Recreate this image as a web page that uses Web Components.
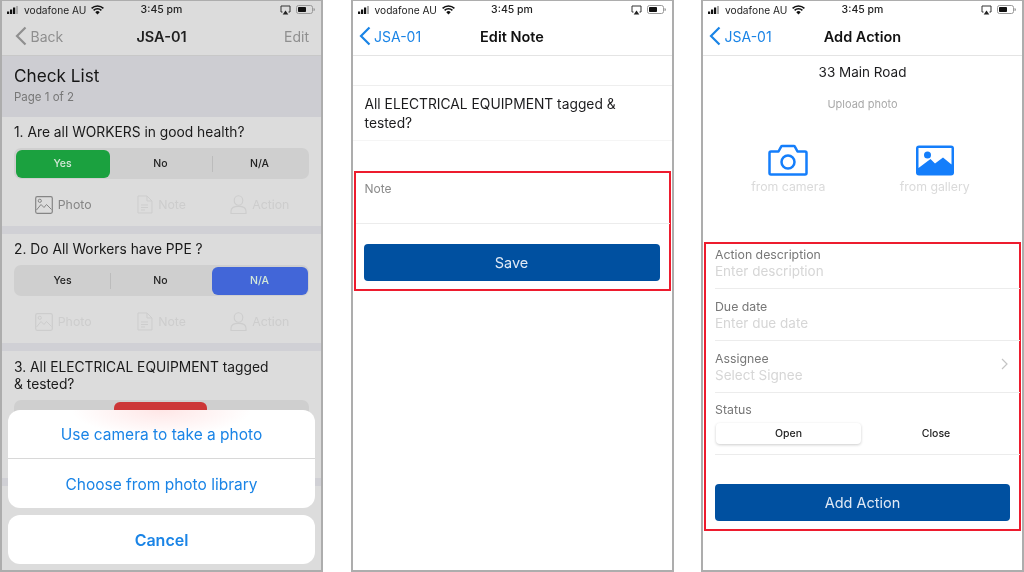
<!DOCTYPE html>
<html>
<head>
<meta charset="utf-8">
<style>
  html, body { margin: 0; height: 572px; overflow: hidden; background: #fff; }
  body { font-family: Inter, "Liberation Sans", sans-serif; color: #1c1c1e; }
  #page { display: flex; justify-content: space-between; height: 572px; }
  .dim {
    --bar-bg: #dcdcdc;
    --bar-line: #c8c8c8;
    --bar-title: #1f1f1f;
    --bar-link: #8f8f8f;
    --frame-bg: #dcdcdc;
  }
</style>
</head>
<body>
<div id="page">
  <app-phone class="dim">
    <status-bar></status-bar>
    <nav-bar back="Back" heading="JSA-01" action="Edit" style="--nav-pad:13px"></nav-bar>
    <list-header heading="Check List" sub="Page 1 of 2"></list-header>
    <check-card question="1. Are all WORKERS in good health?" selected="0" tint="#1ba13f" tools="photo"></check-card>
    <check-card question="2. Do All Workers have PPE ?" selected="2" tint="#4266d8"></check-card>
    <check-card question="3. All ELECTRICAL EQUIPMENT tagged &amp; tested?" selected="1" tint="#cc3637" tall></check-card>
    <hidden-marks></hidden-marks>
    <action-sheet>
      <sheet-button>Use camera to take a photo</sheet-button>
      <sheet-button>Choose from photo library</sheet-button>
      <sheet-button slot="cancel" strong>Cancel</sheet-button>
    </action-sheet>
  </app-phone>

  <app-phone>
    <status-bar></status-bar>
    <nav-bar back="JSA-01" heading="Edit Note" style="--nav-pad:6px"></nav-bar>
    <note-question>All ELECTRICAL EQUIPMENT tagged &amp; tested?</note-question>
    <red-box style="--box-gap:30px;--box-height:120px">
      <note-field>Note</note-field>
      <main-button style="--btn-top:20px;--btn-left:-1px">Save</main-button>
    </red-box>
  </app-phone>

  <app-phone>
    <status-bar></status-bar>
    <nav-bar back="JSA-01" heading="Add Action" style="--nav-pad:6px"></nav-bar>
    <upload-panel address="33 Main Road"></upload-panel>
    <red-box style="--box-gap:0px;--box-height:289px">
      <form-field first label="Action description" hint="Enter description"></form-field>
      <form-field label="Due date" hint="Enter due date"></form-field>
      <form-field label="Assignee" hint="Select Signee" chevron></form-field>
      <status-field></status-field>
      <main-button style="--btn-top:29px;--btn-width:295px">Add Action</main-button>
    </red-box>
  </app-phone>
</div>

<script>
const FONT = 'Inter, "Liberation Sans", sans-serif'

// small base class, every element just renders a string into its open shadow root
class Base extends HTMLElement {
  constructor() {
    super()
    this._shadowRoot = this.attachShadow({ mode: 'open' })
  }
  connectedCallback() {
    this._shadowRoot.innerHTML = this.render()
  }
  attr(name, fallback = '') {
    return this.hasAttribute(name) ? this.getAttribute(name) : fallback
  }
}

class AppPhone extends Base {
  render() {
    return `<style>
      :host {
        display: flex; flex-direction: column; position: relative; box-sizing: border-box;
        width: 323px; height: 572px; overflow: hidden;
        border: solid #adadad; border-width: 1px 2px 2px 2px;
        background: var(--frame-bg, #fff);
        font-family: ${FONT};
        filter: blur(.4px);
      }
    </style><slot></slot>`
  }
}

class StatusBar extends Base {
  render() {
    return `<style>
      :host { display: flex; align-items: center; height: 17px; padding: 0 6px 0 5px; flex: none; position: relative; font-size: 10.2px; color: #222; }
      .carrier { margin-left: 6px; }
      .wifi { margin-left: 5px; }
      .time { position: absolute; left: 0; right: 0; text-align: center; font-size: 10.5px; font-weight: 500; }
      .right { margin-left: auto; display: flex; align-items: center; gap: 5px; }
    </style>
    <svg width="11" height="8" viewBox="0 0 11 8"><rect x="0" y="5.5" width="2.2" height="2.5" fill="#111"/><rect x="3" y="3.5" width="2.2" height="4.5" fill="#111"/><rect x="6" y="1.5" width="2.2" height="6.5" fill="#111"/><rect x="9" y="0" width="2" height="8" fill="#aaa"/></svg>
    <span class="carrier">vodafone AU</span>
    <svg class="wifi" width="13" height="10" viewBox="0 0 13 10"><path d="M.6 3.4a8.4 8.4 0 0 1 11.8 0M2.6 5.4a5.6 5.6 0 0 1 7.8 0" fill="none" stroke="#111" stroke-width="1.5"/><path d="M4.3 7.2a3 3 0 0 1 4.4 0L6.5 9.6z" fill="#111"/></svg>
    <span class="time">3:45 pm</span>
    <span class="right">
      <svg width="11" height="10" viewBox="0 0 11 10"><path d="M2.5 7H1V1h9v6H8.500" fill="none" stroke="#333" stroke-width="1"/><path d="M5.500 5.500 8.300 9.500H2.700z" fill="#222"/></svg>
      <svg width="19" height="9" viewBox="0 0 19 9"><rect x=".5" y=".5" width="16" height="8" rx="2" fill="none" stroke="#999"/><rect x="2" y="2" width="8" height="5" rx=".8" fill="#111"/><path d="M17.500 3v3a1.500 1.500 0 0 0 0-3z" fill="#999"/></svg>
    </span>`
  }
}

class NavBar extends Base {
  render() {
    const action = this.attr('action')
    return `<style>
      :host {
        display: flex; align-items: center; position: relative; flex: none; box-sizing: border-box;
        height: 38px; padding: 0 12px 1px var(--nav-pad, 6px);
        background: var(--bar-bg, #fff); border-bottom: 1px solid var(--bar-line, #e4e4e4);
        font-size: 14px; color: var(--bar-link, #1a84e6);
      }
      svg { flex: none; margin-right: 3.500px; }
      h1 { position: absolute; left: 0; right: 0; margin: 0; text-align: center; font-size: 14.500px; font-weight: 600; color: var(--bar-title, #111); }
      .action { margin-left: auto; }
    </style>
    <svg width="12" height="20" viewBox="0 0 12 20"><path d="M10.500 1.500 2 10l8.500 8.500" fill="none" stroke="currentColor" stroke-width="2.200"/></svg>
    <span>${this.attr('back')}</span>
    <h1>${this.attr('heading')}</h1>
    ${action ? `<span class="action">${action}</span>` : ''}`
  }
}

class ListHeader extends Base {
  render() {
    return `<style>
      :host { display: block; flex: none; box-sizing: border-box; height: 61px; padding: 9px 12px 0; background: #cdcdd2; }
      h2 { margin: 0; font-size: 17.200px; font-weight: 400; line-height: 22px; color: #151515; }
      p { margin: 0; font-size: 11.500px; line-height: 20px; color: #777; }
    </style>
    <h2>${this.attr('heading')}</h2><p>${this.attr('sub')}</p>`
  }
}

class SegControl extends Base {
  render() {
    const selected = Number(this.attr('selected', '0'))
    const tint = this.attr('tint', '#fff')
    const items = this.attr('options', 'Yes,No,N/A').split(',').map((label, i) => {
      const on = i === selected
      const rule = !on && i > 0 && i - 1 !== selected ? 'rule' : ''
      return `<div class="${on ? 'on' : ''} ${rule}"${on ? ` style="background:${tint}"` : ''}>${label}</div>`
    }).join('')
    return `<style>
      :host { display: grid; grid-template-columns: 94px 1fr 96px; box-sizing: border-box; height: 31px; padding: 1.500px; margin: 0 12px; background: #cfcfcf; border-radius: 7px; font-size: 10.500px; font-weight: 500; color: #222; }
      div { display: flex; align-items: center; justify-content: center; border-radius: 6px; position: relative; }
      div:nth-of-type(2).on { margin: 0 4.500px; }
      .on { color: #d4e8d8; }
      .rule::before { content: ''; position: absolute; left: 0; top: 6px; bottom: 6px; width: 1px; background: #bcbcbc; }
    </style>${items}`
  }
}

const TOOL_ICONS = {
  photo: `<svg width="18" height="18" viewBox="0 0 18 18" fill="none" stroke="currentColor"><rect x=".7" y=".7" width="16.600" height="16.600" rx="1.500" stroke-width="1.200"/><circle cx="4.800" cy="4.800" r="1.600"/><path d="M1.500 14 6 8.500l3 3 2.500-3 5 5"/></svg>`,
  note: `<svg width="16" height="19" viewBox="0 0 16 19" fill="none" stroke="currentColor"><path d="M1 1h9l5 5v12H1zM10 1v5h5M4 10h7M4 12.500h7M4 15h4"/></svg>`,
  action: `<svg width="17" height="19" viewBox="0 0 17 19" fill="none" stroke="currentColor" stroke-width="1.100"><ellipse cx="8.500" cy="5.500" rx="4.300" ry="4.800"/><path d="M1 18.500v-2.300c0-2.900 3-4.800 7.500-4.800s7.500 1.900 7.500 4.800v2.300z"/></svg>`
}

class CheckTool extends Base {
  render() {
    const on = this.hasAttribute('on')
    return `<style>
      :host { flex: 1; display: flex; align-items: center; justify-content: center; gap: 5px; font-size: 12.300px; color: ${on ? '#858585' : '#cdcdcd'}; }
    </style>${TOOL_ICONS[this.attr('icon')]}<span>${this.attr('label')}</span>`
  }
}

class CheckCard extends Base {
  render() {
    const tall = this.hasAttribute('tall')
    const tools = this.attr('tools').split(',')
    const tool = (icon, label) => `<check-tool icon="${icon}" label="${label}"${tools.includes(icon) ? ' on' : ''}></check-tool>`
    return `<style>
      :host { display: block; flex: none; box-sizing: border-box; height: ${tall ? 135 : 117}px; background: #dcdcdc; border-bottom: 8px solid #d0d0d5; }
      p { margin: 0; box-sizing: border-box; padding: ${tall ? '8px 40px 7px 12px' : '7px 12px 4px'}; min-height: 31px; font-size: 13.800px; line-height: 17px; color: #1a1a1a; }
      .tools { display: flex; height: 51px; padding: 0 12px; }
    </style>
    <p>${this.attr('question')}</p>
    <seg-control selected="${this.attr('selected')}" tint="${this.attr('tint')}"></seg-control>
    <div class="tools">${tool('photo', 'Photo')}${tool('note', 'Note')}${tool('action', 'Action')}</div>`
  }
}

// tops of the next question, the only part that shows between the two sheets
class HiddenMarks extends Base {
  render() {
    const xs = [35, 52, 63, 80, 105, 114, 122, 133, 143]
    return `<style>
      :host { display: block; position: absolute; left: 0; top: 512px; width: 160px; height: 3px; }
    </style>
    <svg width="160" height="3">${xs.map(x => `<rect x="${x - 2}" y="0" width="2" height="2" fill="#444"/>`).join('')}</svg>`
  }
}

class SheetButton extends Base {
  render() {
    const strong = this.hasAttribute('strong')
    return `<style>
      :host { display: flex; align-items: center; justify-content: center; box-sizing: border-box; height: 49px; padding-top: ${strong ? 0 : 1}px; font-size: ${strong ? 16 : 15.500}px; font-weight: ${strong ? 600 : 400}; color: #1a84e6; }
      :host(:not([slot]):first-of-type) { border-bottom: 1px solid #d8d8d8; }
    </style><slot></slot>`
  }
}

class ActionSheet extends Base {
  render() {
    return `<style>
      :host { display: flex; flex-direction: column; gap: 7px; position: absolute; left: 6px; right: 6px; bottom: 6px; }
      .group { background: #fff; border-radius: 12px; overflow: hidden; }
      .glow { background: radial-gradient(ellipse 90px 26px at 50% 0, #ffe6e6, #fff); }
    </style>
    <div class="group glow"><slot></slot></div>
    <div class="group"><slot name="cancel"></slot></div>`
  }
}

class NoteQuestion extends Base {
  render() {
    return `<style>
      :host { display: block; flex: none; box-sizing: border-box; margin-top: 29px; height: 56px; padding: 9px 30px 0 12px; border-top: 1px solid #eeeeee; border-bottom: 1px solid #f5f5f5; font-size: 13.800px; line-height: 19px; color: #1c1c1e; }
    </style><slot></slot>`
  }
}

class RedBox extends Base {
  render() {
    return `<style>
      :host { display: block; flex: none; box-sizing: border-box; margin: var(--box-gap, 0) 1px 0; height: var(--box-height, 120px); border: 2px solid #ed1c2e; padding-left: 9px; }
    </style><slot></slot>`
  }
}

class NoteField extends Base {
  render() {
    return `<style>
      :host { display: block; box-sizing: border-box; height: 51px; margin: 0 -1px 0 -9px; padding: 8px 0 0 9px; border-bottom: 1px solid #ececec; font-size: 12px; color: #8a8a8a; }
    </style><slot></slot>`
  }
}

class MainButton extends Base {
  render() {
    return `<style>
      :host { display: flex; align-items: center; justify-content: center; height: 37px; width: var(--btn-width, 296px); margin-top: var(--btn-top, 20px); margin-left: var(--btn-left, 0); background: #0050a0; border-radius: 4px; font-size: 14.500px; color: #dfe9f5; }
    </style><slot></slot>`
  }
}

class UploadPanel extends Base {
  render() {
    return `<style>
      :host { display: block; flex: none; height: 186px; text-align: center; }
      .addr { height: 33px; line-height: 33px; font-size: 13.500px; color: #1c1c1e; }
      .hint { height: 31px; line-height: 31px; font-size: 11px; color: #a9a9a9; }
      .opts { display: grid; grid-template-columns: 1fr 1fr; padding: 24px 0 0 12px; width: 293px; }
      .opt { font-size: 12.300px; color: #dadada; line-height: 20px; }
      svg { display: block; margin: 0 auto; }
    </style>
    <div class="addr">${this.attr('address')}</div>
    <div class="hint">Upload photo</div>
    <div class="opts">
      <div class="opt">
        <svg width="40" height="33" viewBox="0 0 40 33"><path d="M3 7.500h7.500L13 2.800c.3-.6.8-.8 1.400-.8h11.200c.6 0 1.100.2 1.400.8l2.500 4.700H37c1 0 1.500.5 1.500 1.500V29c0 1-.5 1.500-1.500 1.500H3c-1 0-1.500-.5-1.500-1.500V9c0-1 .5-1.500 1.500-1.500z" fill="none" stroke="#147efb" stroke-width="2.500" stroke-linejoin="round"/><circle cx="20" cy="18" r="6.500" fill="none" stroke="#147efb" stroke-width="2.500"/></svg>
        from camera
      </div>
      <div class="opt">
        <svg width="40" height="33" viewBox="0 0 40 33"><rect x="1" y="1.500" width="38" height="30" rx="3" fill="#147efb"/><path d="M3.500 4h33v16.500L28 13.500l-8 6-4.500-4.500-12 9z" fill="#fff"/><circle cx="12.500" cy="11" r="3.500" fill="#147efb"/></svg>
        from gallery
      </div>
    </div>`
  }
}

class FormField extends Base {
  render() {
    const first = this.hasAttribute('first')
    return `<style>
      :host { display: block; position: relative; box-sizing: border-box; height: ${first ? 45 : 52}px; padding-top: ${first ? 2 : 9}px; border-bottom: 1px solid #ececec; margin-right: -1px; }
      .label { font-size: 12.300px; line-height: 17px; color: #777; }
      .hint { font-size: 13.500px; line-height: 17px; color: #d6d6d6; }
      svg { position: absolute; right: 12px; top: 17px; }
    </style>
    <div class="label">${this.attr('label')}</div>
    <div class="hint">${this.attr('hint')}</div>
    ${this.hasAttribute('chevron') ? '<svg width="7" height="12" viewBox="0 0 7 12"><path d="M1 1l5 5-5 5" fill="none" stroke="#c4c4c4" stroke-width="1.200"/></svg>' : ''}`
  }
}

class StatusField extends Base {
  render() {
    return `<style>
      :host { display: block; box-sizing: border-box; height: 62px; padding-top: 8px; border-bottom: 1px solid #ececec; margin-right: -1px; }
      .label { font-size: 12.300px; line-height: 17px; color: #777; margin-bottom: 5px; }
      .seg { display: grid; grid-template-columns: 145px 150px; margin-left: 1px; font-size: 10.500px; font-weight: 500; color: #222; }
      .seg div { height: 21px; display: flex; align-items: center; justify-content: center; border-radius: 4px; }
      .seg .on { box-shadow: 0 1px 3px rgba(0,0,0,.2); background: #fff; }
    </style>
    <div class="label">Status</div>
    <div class="seg"><div class="on">Open</div><div>Close</div></div>`
  }
}

customElements.define('app-phone', AppPhone)
customElements.define('status-bar', StatusBar)
customElements.define('nav-bar', NavBar)
customElements.define('list-header', ListHeader)
customElements.define('seg-control', SegControl)
customElements.define('check-tool', CheckTool)
customElements.define('check-card', CheckCard)
customElements.define('hidden-marks', HiddenMarks)
customElements.define('sheet-button', SheetButton)
customElements.define('action-sheet', ActionSheet)
customElements.define('note-question', NoteQuestion)
customElements.define('red-box', RedBox)
customElements.define('note-field', NoteField)
customElements.define('main-button', MainButton)
customElements.define('upload-panel', UploadPanel)
customElements.define('form-field', FormField)
customElements.define('status-field', StatusField)
</script>
</body>
</html>
